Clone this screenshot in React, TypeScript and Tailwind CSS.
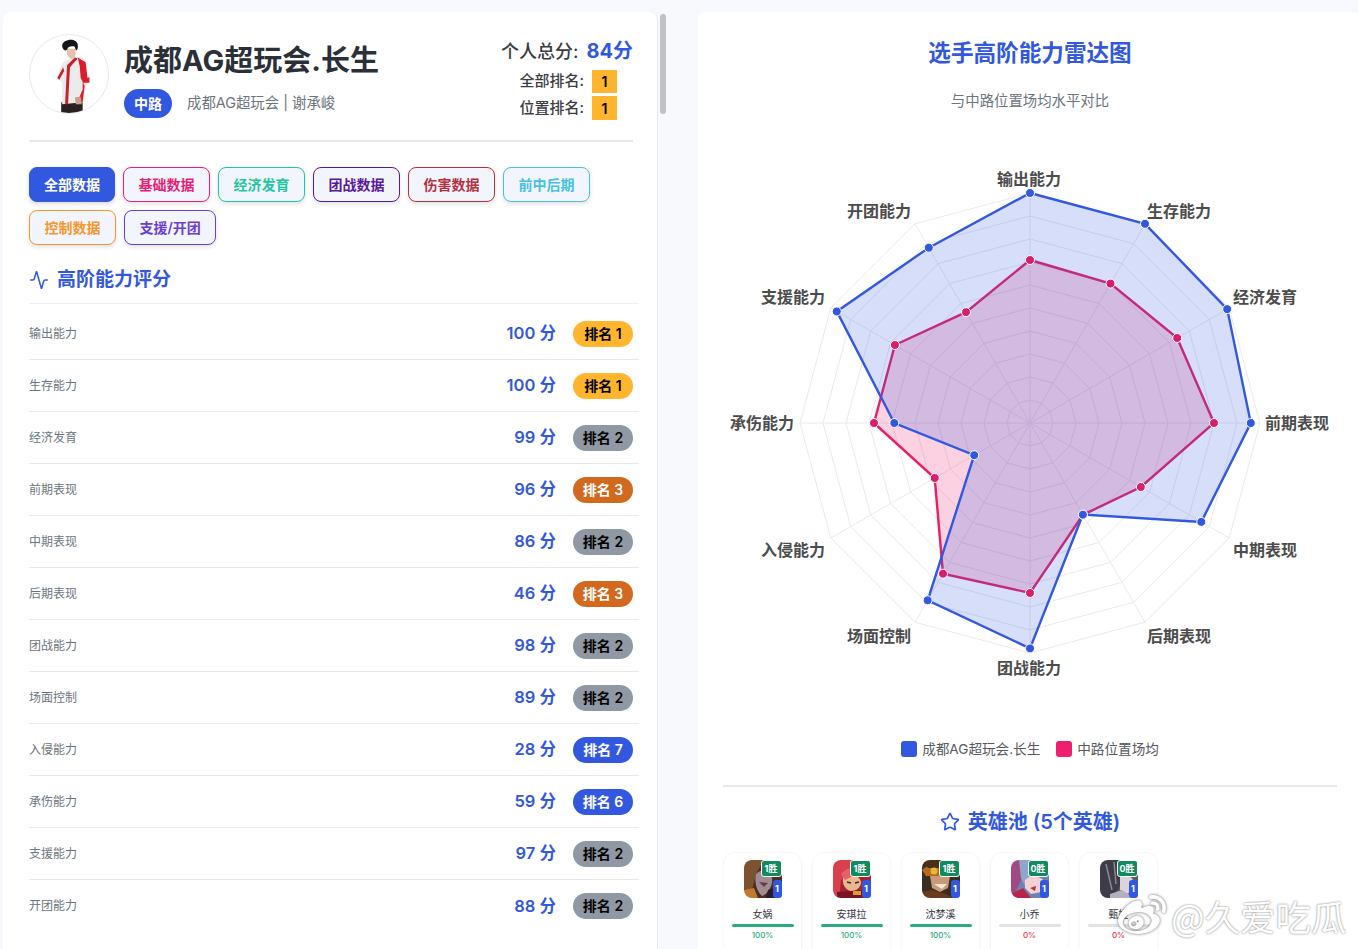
import React from "react";
import { Activity, Star } from "lucide-react";
import { FaWeibo } from "react-icons/fa";

const BLUE = "#3358e0";
const rows: [string, number, number][] = [
  ["输出能力", 100, 1],
  ["生存能力", 100, 1],
  ["经济发育", 99, 2],
  ["前期表现", 96, 3],
  ["中期表现", 86, 2],
  ["后期表现", 46, 3],
  ["团战能力", 98, 2],
  ["场面控制", 89, 2],
  ["入侵能力", 28, 7],
  ["承伤能力", 59, 6],
  ["支援能力", 97, 2],
  ["开团能力", 88, 2],
];

const tabs: [string, string][] = [
  ["基础数据", "border-[#e91e78] text-[#e91e78]"],
  ["经济发育", "border-[#1fc7a0] text-[#1fc7a0]"],
  ["团战数据", "border-[#5a189a] text-[#5a189a]"],
  ["伤害数据", "border-[#b7303f] text-[#b7303f]"],
  ["前中后期", "border-[#48c0e0] text-[#48c0e0]"],
  ["控制数据", "border-[#f8962e] text-[#f8962e]"],
  ["支援/开团", "border-[#6a3fd0] text-[#6a3fd0]"],
];

function badgeClass(rank: number) {
  if (rank === 1) return "bg-[#ffb52e] text-black";
  if (rank === 2) return "bg-[#8f98a3] text-black";
  if (rank === 3) return "bg-[#d2691e] text-white";
  return "bg-[#3358e0] text-white";
}

const CX = 307;
const CY = 293;
const R = 230;
const labelPos: [number, number][] = [
  [306, 49], [456, 81], [542, 167], [574, 293], [542, 420], [456, 506],
  [306, 538], [156, 506], [70, 420], [39, 293], [70, 167], [156, 81],
];
const pinkR = [163, 161, 170, 184, 128, 106, 170, 174, 110, 156, 156, 128];

function pt(i: number, r: number): [number, number] {
  const a = (i * Math.PI) / 6;
  return [CX + r * Math.sin(a), CY - r * Math.cos(a)];
}
const poly = (rs: number[]) => rs.map((r, i) => pt(i, r).map((v) => v.toFixed(1)).join(",")).join(" ");

function Radar() {
  const blueR = rows.map((r) => (r[1] * R) / 100);
  return (
    <svg width="614" height="590" viewBox="0 0 614 590" className="mt-[19px] block">
      {Array.from({ length: 10 }, (_, k) => (
        <polygon key={k} points={poly(Array(12).fill((k + 1) * 23))} fill="none" stroke="#eaeaec" strokeWidth="1" />
      ))}
      {Array.from({ length: 12 }, (_, i) => {
        const [x, y] = pt(i, R);
        return <line key={i} x1={CX} y1={CY} x2={x} y2={y} stroke="#eaeaec" strokeWidth="1" />;
      })}
      <polygon points={poly(pinkR)} fill="#f01e6e" fillOpacity="0.2" stroke="#e91e63" strokeWidth="2.4" />
      <polygon points={poly(blueR)} fill="#3358e0" fillOpacity="0.2" stroke="#3358e0" strokeWidth="2.4" />
      {pinkR.map((r, i) => {
        const [x, y] = pt(i, r);
        return <circle key={i} cx={x} cy={y} r="4.5" fill="#d81f6e" stroke="#fff" strokeWidth="1" />;
      })}
      {blueR.map((r, i) => {
        const [x, y] = pt(i, r);
        return <circle key={i} cx={x} cy={y} r="4.5" fill="#3358e0" stroke="#fff" strokeWidth="1" />;
      })}
      {rows.map((r, i) => (
        <text
          key={r[0]}
          x={labelPos[i][0]}
          y={labelPos[i][1]}
          textAnchor="middle"
          dominantBaseline="central"
          className="fill-[#4c4c4c] text-[16px] font-semibold"
        >
          {r[0]}
        </text>
      ))}
    </svg>
  );
}

function Player() {
  return (
    <svg viewBox="0 0 80 80" className="block h-full w-full blur-[0.4px]">
      <rect x="32" y="69" width="22" height="11" fill="#2a2022" />
      <path d="M34 28 L46 22 L54 23 L58 30 L59 46 L58 52 L54 69 L33 71 L33 49 L28 44 L30 36Z" fill="#ecebeb" />
      <path d="M46 23 L38 31 L36 71 L39 71 L41 33 L49 24Z" fill="#c8202c" />
      <path d="M49 23 L57 28 L59 44 L61 43 L61 49 L54 49 L54 56 L49 68 L54 69 L56 52 L52 44 L51 32Z" fill="#d91f2a" />
      <path d="M34 33 L28 44 L30 46 L35 37Z" fill="#c8202c" />
      <path d="M46 64 L52 63 L53 71 L47 71Z" fill="#c9a08c" />
      <path d="M38 14 L46 14 L47 19 L45 24 L41 24 L38 20Z" fill="#e6c2ac" />
      <path d="M33 11 C33 4 48 2 49 10 C49.5 14 48 16 47 16 L46 12 C42 11 39 12 38 15 L36 16 C34 15 33 13 33 11Z" fill="#17151a" />
    </svg>
  );
}

function HeroArt({ k }: { k: number }) {
  const cls = "block h-full w-full blur-[0.5px]";
  if (k === 0)
    return (
      <svg viewBox="0 0 38 38" className={cls}>
        <rect width="38" height="38" fill="#4e2c22" />
        <path d="M0 0H20L12 14L6 38H0Z" fill="#7d5230" />
        <path d="M12 14C18 8 26 10 28 18C29 26 24 34 18 36C13 32 10 22 12 14Z" fill="#a08c94" />
        <path d="M22 0L38 0V12L28 14Z" fill="#3d2520" />
        <path d="M15 22L24 23L20 27Z" fill="#6e3a44" />
        <path d="M0 30L10 28L14 38H0Z" fill="#c27a32" />
        <path d="M24 30L38 24V38H22Z" fill="#2c1e24" />
      </svg>
    );
  if (k === 1)
    return (
      <svg viewBox="0 0 38 38" className={cls}>
        <rect width="38" height="38" fill="#a82230" />
        <path d="M0 0H26L20 10L8 20L6 38H0Z" fill="#d8414c" />
        <path d="M10 18C16 12 26 14 28 22C28 28 22 32 17 31C12 29 9 24 10 18Z" fill="#e6b88e" />
        <path d="M8 14C14 6 26 6 32 14L24 14L12 20Z" fill="#e8606a" />
        <path d="M14 22L18 23M22 23L26 22" stroke="#5a2018" strokeWidth="1.5" />
        <path d="M4 32L30 30L34 38H4Z" fill="#7a1420" />
        <rect x="20" y="31" width="8" height="4" fill="#d9a032" />
      </svg>
    );
  if (k === 2)
    return (
      <svg viewBox="0 0 38 38" className={cls}>
        <rect width="38" height="38" fill="#3a2c20" />
        <path d="M0 10C8 2 24 2 32 12L20 16L4 16Z" fill="#b8681c" />
        <path d="M0 0H30L24 8L6 8Z" fill="#4a3018" />
        <circle cx="12" cy="11" r="3.5" fill="#e6b83a" />
        <path d="M8 16H28L26 28L18 32L10 28Z" fill="#c99a78" />
        <path d="M12 24L25 24L20 29Z" fill="#f2e6dc" />
        <path d="M0 32L10 30L24 34L30 38H0Z" fill="#6a3a1c" />
      </svg>
    );
  if (k === 3)
    return (
      <svg viewBox="0 0 38 38" className={cls}>
        <rect width="38" height="38" fill="#6f82b4" />
        <path d="M0 0H14L10 20L4 34L0 38Z" fill="#a04a84" />
        <path d="M8 0H30L32 14L22 14L14 26L10 18Z" fill="#8fa6cc" />
        <path d="M14 20C20 14 30 16 34 22L30 32L20 34L14 28Z" fill="#f4d2d4" />
        <path d="M19 28L25 26L24 31Z" fill="#c0283c" />
        <path d="M0 34L12 28L20 38H0Z" fill="#b8244e" />
      </svg>
    );
  return (
    <svg viewBox="0 0 38 38" className={cls}>
      <rect width="38" height="38" fill="#5e5a66" />
      <path d="M0 0H28L24 16L18 30L10 38H0Z" fill="#3e3c48" />
      <path d="M6 4L12 30M14 2L16 24" stroke="#8a8894" strokeWidth="1.5" />
      <path d="M20 14C26 12 34 18 34 24L28 34L20 30Z" fill="#dcd4da" />
      <path d="M10 34L22 30L34 38H10Z" fill="#b4b0c0" />
    </svg>
  );
}

const heroes: [string, number][] = [
  ["女娲", 1],
  ["安琪拉", 1],
  ["沈梦溪", 1],
  ["小乔", 0],
  ["甄姬", 0],
];

export default function App() {
  return (
    <div className="relative flex h-[949px] overflow-hidden bg-[#f8f9fc] pl-[3px] pt-[12px] [font-family:Inter,'Noto_Sans_CJK_SC',sans-serif]">
      {/* left panel */}
      <div className="w-[655px] shrink-0 rounded-t-lg border-r border-[#e8e9ee] bg-white pl-[26px] pr-[24px] pt-[22px]">
        <div className="flex h-[108px] items-start border-b-2 border-[#e6e8eb]">
          <div className="h-[80px] w-[80px] shrink-0 overflow-hidden rounded-full border border-[#e9e9ec] bg-white">
            <Player />
          </div>
          <div className="ml-[15px] flex-1">
            <div className="mt-[8px] text-[29px] font-bold leading-[38px] text-[#2b2f38]">成都AG超玩会.长生</div>
            <div className="mt-[9px] flex items-center">
              <span className="flex h-[29px] w-[48px] items-center justify-center rounded-full bg-[#3358e0] text-[14px] font-semibold text-white">中路</span>
              <span className="ml-[15px] pb-[2px] text-[14.4px] text-[#6c757d]">成都AG超玩会 | 谢承峻</span>
            </div>
          </div>
          <div className="flex flex-col items-end">
            <div className="mt-[2px] flex h-[30px] items-center">
              <span className="text-[18px] font-medium text-[#3a3d44]">个人总分:</span>
              <span className="ml-[8px] text-[20px] font-bold text-[#3358e0]">84分</span>
            </div>
            <div className="mr-[16px] mt-[4px] flex h-[23px] items-center">
              <span className="text-[15px] font-medium text-[#3a3d44]">全部排名:</span>
              <span className="ml-[8px] flex h-[23px] w-[25px] items-center justify-center bg-[#ffb52e] text-[14px] font-semibold text-black">1</span>
            </div>
            <div className="mr-[16px] mt-[3px] flex h-[24px] items-center">
              <span className="text-[15px] font-medium text-[#3a3d44]">位置排名:</span>
              <span className="ml-[8px] flex h-[24px] w-[25px] items-center justify-center bg-[#ffb52e] text-[14px] font-semibold text-black">1</span>
            </div>
          </div>
        </div>

        <div className="mt-[25px] flex flex-wrap gap-[8px]">
          <button className="h-[35px] rounded-lg border-[1.5px] border-[#3358e0] bg-[#3358e0] px-[14px] text-[14px] font-semibold text-white shadow-[0_2px_5px_rgba(0,0,0,0.15)]">全部数据</button>
          {tabs.map(([t, c]) => (
            <button key={t} className={`h-[35px] rounded-lg border-[1.5px] bg-[#f3f5fc] px-[14.5px] text-[14px] font-semibold shadow-[0_2px_5px_rgba(0,0,0,0.12)] ${c}`}>{t}</button>
          ))}
        </div>

        <div className="mt-[21px] flex h-[28px] items-center">
          <Activity size={20} color={BLUE} strokeWidth={1.8} />
          <span className="ml-[8px] text-[19px] font-semibold text-[#3358e0]">高阶能力评分</span>
        </div>

        <div className="mt-[9px] w-[610px] border-t border-[#eceef0] pt-[4px]">
          {rows.map(([name, score, rank], i) => (
            <div key={name} className={`flex h-[52px] items-center pr-[6px] ${i < 11 ? "border-b border-[#e6e8ea]" : ""}`}>
              <span className="flex-1 text-[12px] text-[#6c757d]">{name}</span>
              <span className="text-[16.5px] font-semibold text-[#3358e0]">{score} 分</span>
              <span className={`ml-[17px] flex h-[26px] w-[60px] items-center justify-center rounded-full pb-[1px] text-[14px] font-semibold ${badgeClass(rank)}`}>排名 {rank}</span>
            </div>
          ))}
        </div>
      </div>

      {/* scrollbar */}
      <div className="ml-[2px] mt-[2px] h-[100px] w-[6px] shrink-0 rounded-full bg-[#c2c2c4]" />

      {/* right panel */}
      <div className="ml-[32px] w-[664px] shrink-0 rounded-t-lg bg-white px-[25px] pt-[25px]">
        <div className="text-center text-[22.6px] font-semibold leading-[32px] text-[#3358e0]">选手高阶能力雷达图</div>
        <div className="mt-[22px] text-center text-[14.4px] leading-[20px] text-[#6c757d]">与中路位置场均水平对比</div>
        <Radar />
        <div className="mt-[19px] flex h-[20px] items-center justify-center text-[13.6px] text-[#55585e]">
          <span className="h-[16px] w-[16px] rounded-[3px] bg-[#3358e0]" />
          <span className="ml-[5px]">成都AG超玩会.长生</span>
          <span className="ml-[16px] h-[16px] w-[16px] rounded-[3px] bg-[#f01e6e]" />
          <span className="ml-[5px]">中路位置场均</span>
        </div>
        <div className="mt-[26px] h-[2px] bg-[#e6e8eb]" />
        <div className="mt-[21px] flex h-[28px] items-center justify-center text-[#3358e0]">
          <Star size={20} strokeWidth={2} color={BLUE} />
          <span className="ml-[8px] text-[20px] font-semibold">英雄池 (5个英雄)</span>
        </div>
        <div className="mt-[16px] flex gap-[10px]">
          {heroes.map(([name, wins], i) => (
            <div key={name} className="flex h-[110px] w-[79px] shrink-0 flex-col items-center rounded-xl border border-[#f7f7fa] bg-white pt-[7px] shadow-[0_1px_4px_rgba(0,0,0,0.02)]">
              <div className="relative h-[38px] w-[38px]">
                <div className="h-full w-full overflow-hidden rounded-lg"><HeroArt k={i} /></div>
                <span className="absolute right-0 top-0 flex h-[17px] w-[21px] items-center justify-center rounded-[3px] border border-white bg-[#128a5f] text-[9px] font-bold text-white">{wins}胜</span>
                <span className="absolute bottom-0 right-0 flex h-[18px] w-[9px] items-center justify-center rounded-[3px] bg-[#3358e0] text-[9px] font-bold text-white">1</span>
              </div>
              <div className="mt-[9px] text-[10px] leading-[14px] text-[#33363c]">{name}</div>
              <div className={`mt-[3px] h-[3px] w-[62px] rounded-full ${wins ? "bg-[#2bab80]" : "bg-[#e2e2e2]"}`} />
              <div className={`mt-[2px] text-[8px] font-medium leading-[12px] ${wins ? "text-[#2bab80]" : "text-[#e0364f]"}`}>{wins ? "100%" : "0%"}</div>
            </div>
          ))}
        </div>
      </div>

      {/* watermark overlay */}
      <div className="absolute left-[1118px] top-[892px] flex items-center">
        <FaWeibo size={48} className="text-white [filter:drop-shadow(0_0_1.5px_#666)]" />
        <span className="ml-[5px] whitespace-nowrap text-[35.5px] leading-[44px] text-white [font-family:'Noto_Sans_CJK_SC',sans-serif] [text-shadow:0_0_2px_#666]">@久爱吃瓜</span>
      </div>
    </div>
  );
}
